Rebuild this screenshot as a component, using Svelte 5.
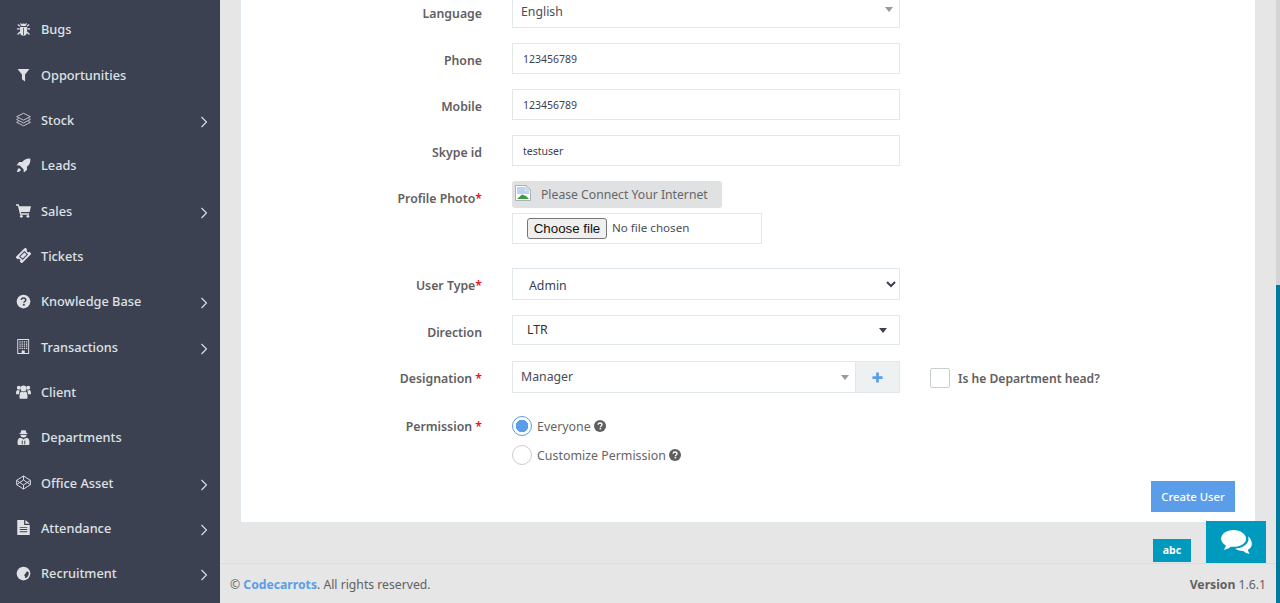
<script>
  const icons = {
    bug: '<path d="M8 6.500a4 4 0 0 1 8 0z"/><path d="M6.500 8h11v8.500a5.500 5.500 0 0 1-11 0z"/><path d="M6 11H1.500M18 11h4.500M6.500 7 3 4M17.500 7 21 4M6.500 16 2.500 20M17.500 16l4 4M7 2.500l2 2M17 2.500l-2 2" stroke="currentColor" stroke-width="2" fill="none"/><path d="M11.400 9h1.200v12h-1.200z" fill="#3c4152"/>',
    filter: '<path d="M2.500 3h19l-7 9V23l-5-3.500V12z"/>',
    layers: '<g fill="none" stroke="currentColor" stroke-width="1.300" stroke-linejoin="round"><path d="M12 2 23 7.500 12 13 1 7.500z"/><path d="M4 10.500 1 12 12 17.500 23 12l-3-1.500"/><path d="M4 15 1 16.500 12 22l11-5.500L20 15"/></g>',
    rocket: '<path d="M23 1c-6-.5-10 1.500-13 5.500H5L1 11.500l5 .5 6 6 .5 5 5-4v-5C21.500 11 23.500 7 23 1z"/><path d="M5 16c-2 1-3 3.500-3.500 6.500C4.500 22 7 21 8 19z"/>',
    cart: '<path d="M0 2h4.500l.8 3H24l-2.200 9.500H7.800l.5 2H21v2.200H6.500L3 4.200H0z"/><circle cx="8.500" cy="21.300" r="2.200"/><circle cx="19" cy="21.300" r="2.200"/>',
    ticket: '<g transform="rotate(-45 12 12)"><path d="M1 5H23V9.500a2.500 2.500 0 0 0 0 5V19H1V14.500a2.500 2.500 0 0 0 0-5z"/><path d="M6 8H18V16H6z" fill="#3c4152"/><path d="M7.500 9.500H16.500V14.500H7.500z"/></g>',
    question: '<circle cx="12" cy="12" r="11"/><path d="M8.500 9.500C8.700 7.500 10 6.500 12 6.500c2.200 0 3.600 1.200 3.600 3 0 2.500-3 2.500-3 4.500" fill="none" stroke="#3c4152" stroke-width="2.400"/><rect x="11" y="15.800" width="3" height="2.800" fill="#3c4152"/>',
    building: '<path fill-rule="evenodd" d="M2 0H21V24H2zM3.500 1.500V22.500H9V18.500H14V22.500H19.500V1.500z"/><path d="M5.500 3.500h2v2h-2zM9 3.500h2v2H9zM12.500 3.500h2v2h-2zM16 3.500h2v2h-2zM5.500 7h2v2h-2zM9 7h2v2H9zM12.500 7h2v2h-2zM16 7h2v2h-2zM5.500 10.500h2v2h-2zM9 10.500h2v2H9zM12.500 10.500h2v2h-2zM16 10.500h2v2h-2zM5.500 14h2v2h-2zM9 14h2v2H9zM12.500 14h2v2h-2zM16 14h2v2h-2z"/>',
    users: '<circle cx="4.500" cy="6" r="3.200"/><circle cx="19.500" cy="6" r="3.200"/><circle cx="12" cy="7" r="4.800"/><path d="M0 15c0-4 1.500-5.500 3-5.500 1 1 2 1 3 1-.5 2-1 3.500-1 6H1.500C.5 16.500 0 16 0 15zM24 15c0-4-1.500-5.500-3-5.500-1 1-2 1-3 1 .5 2 1 3.500 1 6h3.500c1 0 1.500-.5 1.500-1.500z"/><path d="M5.500 21.500c0-6 1.500-9.500 3.500-9.500 2 1.500 4 1.500 6 0 2 0 3.500 3.500 3.500 9.500 0 1.500-1 2-2 2h-9c-1 0-2-.5-2-2z"/>',
    secret: '<path d="M7 5 8.500 .5h7L17 5l3 1.500H4z"/><path d="M7 7.500h10c.3 2.500-2 4.500-5 4.500S6.700 10 7 7.500z"/><path d="M2.500 21c0-5 .5-7 4-8.500l3.500 1 2 1.500 2-1.500 3.500-1c3.500 1.500 4 3.500 4 8.500 0 2-1 3-2 3h-15c-1 0-2-1-2-3z"/><path d="M10 17v6M14 17v6" stroke="#3c4152" stroke-width="1.500"/>',
    codepen: '<g fill="none" stroke="currentColor" stroke-width="1.500" stroke-linejoin="round"><path d="M12 1.500 23 8.500v7L12 22.500 1 15.500v-7z"/><path d="M12 8 6 12l6 4 6-4z"/><path d="M12 1.500V8M12 16v6.500M1 8.500 6 12 1 15.500M23 8.500 18 12l5 3.500"/></g>',
    file: '<path fill-rule="evenodd" d="M2 0H13V8H22V24H2zM6 11V12.500H18V11zM6 14.500V16H18V14.500zM6 18V19.500H18V18z"/><path d="M15 0 22 6H15z"/>',
    globe: '<circle cx="12" cy="12" r="11"/><path d="M17 9c1.500-.3 2.800 .3 3.500 1.500.3 2.800-.7 5.500-2.800 7.600-1.300 .9-2.500 1.200-3.400 .9.400-1.700.2-3-1-3.800 0-1.700.9-2.200 1.800-2.700.5-1.300.7-2.700 1.900-3.500z" fill="#3c4152"/>'
  };

  const menu = [
    { label: 'Bugs', icon: 'bug' },
    { label: 'Opportunities', icon: 'filter' },
    { label: 'Stock', icon: 'layers', sub: true },
    { label: 'Leads', icon: 'rocket' },
    { label: 'Sales', icon: 'cart', sub: true },
    { label: 'Tickets', icon: 'ticket' },
    { label: 'Knowledge Base', icon: 'question', sub: true },
    { label: 'Transactions', icon: 'building', sub: true },
    { label: 'Client', icon: 'users' },
    { label: 'Departments', icon: 'secret' },
    { label: 'Office Asset', icon: 'codepen', sub: true },
    { label: 'Attendance', icon: 'file', sub: true },
    { label: 'Recruitment', icon: 'globe', sub: true }
  ];
</script>

{#snippet help()}
  <svg class="help" viewBox="0 0 24 24" fill="#5f5f5f">
    <circle cx="12" cy="12" r="12" />
    <path d="M8 9.500C8.200 7.300 9.800 6 12 6c2.400 0 4 1.400 4 3.300 0 2.800-3.200 2.700-3.200 5" fill="none" stroke="#fff" stroke-width="2.600" />
    <rect x="11.300" y="15.800" width="3" height="3" fill="#fff" />
  </svg>
{/snippet}

<div class="layout">
  <nav class="sidebar">
    {#each menu as item}
      <div class="menu-item">
        <svg class="menu-icon" viewBox="0 0 24 24" fill="currentColor">{@html icons[item.icon]}</svg>
        <span class="menu-label">{item.label}</span>
        {#if item.sub}
          <svg class="chevron" viewBox="0 0 8 12" fill="none" stroke="currentColor" stroke-width="1.100"><path d="M1.500 1 6.500 6l-5 5" /></svg>
        {/if}
      </div>
    {/each}
  </nav>

  <main class="main">
    <div class="content">
      <form class="card">
        <div class="row first">
          <span class="label">Language</span>
          <div class="select2"><span>English</span><i class="caret gray"></i></div>
        </div>
        <div class="row">
          <label class="label" for="phone">Phone</label>
          <input id="phone" class="input" value="123456789" />
        </div>
        <div class="row">
          <label class="label" for="mobile">Mobile</label>
          <input id="mobile" class="input" value="123456789" />
        </div>
        <div class="row">
          <label class="label" for="skype">Skype id</label>
          <input id="skype" class="input" value="testuser" />
        </div>
        <div class="row photo-row">
          <span class="label">Profile Photo<em>*</em></span>
          <div class="photo">
            <div class="thumb">
              <svg class="broken" viewBox="0 0 16 16">
                <path d="M.5.5H11L15.500 5V15.500H.5z" fill="#fff" stroke="#a9b1ba" />
                <path d="M2 2H10V6H14V9L2 9z" fill="#bcd3f5" />
                <path d="M2 14 7 9.500 11 11 14 14z" fill="#3f9a3a" />
                <path d="M11 .5V5H15.500z" fill="#e8e8e8" stroke="#a9b1ba" stroke-width=".7" />
              </svg>
              <span>Please Connect Your Internet</span>
            </div>
            <div class="file-box">
              <button type="button" class="file-btn">Choose file</button>
              <span>No file chosen</span>
            </div>
          </div>
        </div>
        <div class="row type-row">
          <label class="label" for="type">User Type<em>*</em></label>
          <select id="type" class="native"><option>Admin</option></select>
        </div>
        <div class="row direction-row">
          <span class="label">Direction</span>
          <div class="select2 direction"><span>LTR</span><i class="caret"></i></div>
        </div>
        <div class="row designation-row">
          <span class="label">Designation <em>*</em></span>
          <div class="group">
            <div class="select2 designation"><span>Manager</span><i class="caret gray"></i></div>
            <button type="button" class="addon" aria-label="Add">
              <svg viewBox="0 0 12 12" fill="#5b9de8"><path d="M4.500 .5h3v4h4v3h-4v4h-3v-4h-4v-3h4z" /></svg>
            </button>
          </div>
          <div class="head-check"><span class="checkbox"></span><span>Is he Department head?</span></div>
        </div>
        <div class="row permission-row">
          <span class="label">Permission <em>*</em></span>
          <div class="radios">
            <div class="radio-line"><span class="radio on"></span><span>Everyone</span>{@render help()}</div>
            <div class="radio-line"><span class="radio"></span><span>Customize Permission</span>{@render help()}</div>
          </div>
        </div>
        <div class="actions"><button type="button" class="create">Create User</button></div>
      </form>
    </div>

    <footer class="footer">
      <span>© <a href="#top">Codecarrots</a>. All rights reserved.</span>
      <span><b>Version</b> 1.6.1</span>
    </footer>
  </main>

  <div class="badge">abc</div>
  <button type="button" class="chat" aria-label="Chat">
    <svg viewBox="0 0 32 26" fill="#fff">
      <path d="M13 0C5.800 0 0 4 0 9c0 2.900 2 5.400 5 7-.4 1.500-1.200 3-2.500 4.300 3 0 5.500-1.200 7.500-3 1 .1 2 .2 3 .2 7.200 0 13-3.800 13-8.500S20.200 0 13 0z" />
      <path d="M28 6.500c.3.8.500 1.600.5 2.500 0 5.500-6 10-14 10.300C16.500 21 19.800 22 23 21.800c1.800 1.600 4 2.700 7 3-1-1.200-1.900-2.700-2.200-4.300 2.600-1.300 4.200-3.500 4.200-6 0-3.200-1.500-6.100-4-8z" />
    </svg>
  </button>
  <div class="scroll-track"><div class="scroll-thumb"></div></div>
</div>

<style>
  :global(body) {
    margin: 0;
    overflow: hidden;
    font-family: "Noto Sans", "Open Sans", sans-serif;
  }

  .layout {
    display: flex;
    position: relative;
    height: 603px;
    overflow: hidden;
    background: #e6e6e6;
  }

  .sidebar {
    flex: 0 0 220px;
    box-sizing: border-box;
    padding-top: 6.600px;
    background: #3c4152;
    color: #dfe1e5;
  }

  .menu-item {
    display: flex;
    align-items: center;
    height: 45.33px;
    padding-left: 16px;
    box-sizing: border-box;
  }

  .menu-icon {
    flex: 0 0 15px;
    width: 15px;
    height: 15px;
    margin-right: 10px;
  }

  .menu-label {
    font-size: 12.750px;
    font-weight: 500;
  }

  .chevron {
    width: 8px;
    height: 12px;
    margin-left: auto;
    margin-right: 12px;
    margin-top: 4px;
  }

  .main {
    flex: 1;
    display: flex;
    flex-direction: column;
    min-width: 0;
  }

  .content {
    flex: 1;
    padding: 0 24px 0 20px;
  }

  .card {
    height: 523px;
    box-sizing: border-box;
    background: #fff;
    border: 1px solid #e0e8ec;
    border-top: 0;
    overflow: hidden;
  }

  .row {
    display: grid;
    grid-template-columns: 241px 388px;
    column-gap: 30px;
    margin-bottom: 15px;
    align-items: start;
  }

  .row.first {
    margin-top: -3px;
    margin-bottom: 15px;
  }

  .label {
    text-align: right;
    font-size: 12.300px;
    font-weight: 600;
    color: #5f6062;
    line-height: 20px;
    padding-top: 8px;
  }

  .row.first .label {
    padding-top: 7px;
  }

  .label em {
    font-style: normal;
    color: #e8131c;
  }

  .input,
  .select2 {
    box-sizing: border-box;
    width: 100%;
    height: 31px;
    border: 1px solid #e0e8e9;
    background: #fff;
    font-family: inherit;
    outline: none;
  }

  .input {
    padding: 0 10px;
    font-size: 10.500px;
    color: #3c4152;
  }

  .select2 {
    display: flex;
    align-items: center;
    justify-content: space-between;
    padding: 0 6px 0 8px;
    font-size: 12.300px;
    color: #4a4d55;
  }

  .caret {
    width: 0;
    height: 0;
    border-left: 4px solid transparent;
    border-right: 4px solid transparent;
    border-top: 5px solid #3c4152;
  }

  .caret.gray {
    border-top-color: #999;
  }

  .row.first .select2 span {
    margin-top: -3px;
  }

  .row.first .caret {
    margin-top: -6px;
  }

  .photo-row {
    margin-bottom: 24px;
  }

  .photo {
    display: flex;
    flex-direction: column;
    gap: 5px;
  }

  .thumb {
    display: flex;
    align-items: center;
    width: 210px;
    height: 27px;
    box-sizing: border-box;
    padding-left: 3px;
    gap: 10px;
    border-radius: 3px;
    background: #e0e1e3;
    color: #666;
    font-size: 12.200px;
  }

  .broken {
    width: 16px;
    height: 16px;
    margin-top: -3px;
  }

  .file-box {
    box-sizing: border-box;
    width: 250px;
    height: 31px;
    padding-left: 14px;
    display: flex;
    align-items: center;
    gap: 5px;
    border: 1px solid #e0e8e9;
    font-size: 11.600px;
    color: #4a4d55;
  }

  .file-box span {
    margin-top: -2px;
  }

  .file-btn {
    font-family: "Liberation Sans", sans-serif;
    font-size: 13.300px;
    width: 80px;
    height: 21px;
    padding: 0;
    color: #111;
    background: #efefef;
    border: 1px solid #767676;
    border-radius: 3px;
  }

  .native {
    box-sizing: border-box;
    width: 100%;
    height: 32px;
    padding: 2px 12px 0;
    font-family: inherit;
    font-size: 12.300px;
    color: #3c4152;
    background: #fff;
    border: 1px solid #e0e8e9;
    outline: none;
  }

  .direction {
    padding: 0 12px 0 14px;
    color: #333;
    height: 30px;
  }

  .direction span {
    margin-top: -2px;
  }

  .direction-row {
    margin-bottom: 16px;
  }

  .designation-row {
    grid-template-columns: 241px 388px auto;
    margin-bottom: 22px;
  }

  .group {
    display: flex;
    height: 32px;
  }

  .designation {
    flex: 1;
    height: 32px;
    border-right: 0;
    padding-right: 6px;
  }

  .designation span {
    margin-top: -2px;
  }

  .addon {
    width: 45px;
    padding: 0;
    background: #eef1f1;
    border: 1px solid #e0e8e9;
    display: flex;
    align-items: center;
    justify-content: center;
  }

  .addon svg {
    width: 11px;
    height: 11px;
  }

  .head-check {
    display: flex;
    align-items: center;
    gap: 8px;
    height: 32px;
    margin-top: 1px;
    font-size: 12.100px;
    font-weight: 600;
    color: #5f6062;
  }

  .checkbox {
    width: 18px;
    height: 18px;
    border: 1px solid #c8cdd0;
    border-radius: 2px;
    background: #fff;
  }

  .permission-row .label {
    padding-top: 1px;
  }

  .radios {
    display: flex;
    flex-direction: column;
    gap: 9px;
  }

  .radio-line {
    display: flex;
    align-items: center;
    height: 20px;
    font-size: 12.400px;
    color: #666;
  }

  .radio {
    box-sizing: border-box;
    flex: none;
    width: 20px;
    height: 20px;
    margin-right: 5px;
    border: 1px solid #ccc;
    border-radius: 50%;
    background: #fff;
  }

  .radio.on {
    border-color: #5b9de8;
    background: radial-gradient(circle, #5b9de8 0 6px, #fff 6.500px);
  }

  .help {
    width: 12px;
    height: 12px;
    margin-left: 3px;
  }

  .actions {
    display: flex;
    justify-content: flex-end;
    padding-right: 20px;
    margin-top: 16px;
  }

  .create {
    width: 84px;
    height: 31px;
    padding: 0;
    border: 0;
    background: #5b9de8;
    color: #fff;
    font-family: inherit;
    font-size: 11.300px;
    font-weight: 500;
  }

  .footer {
    flex: 0 0 39px;
    box-sizing: content-box;
    display: flex;
    align-items: center;
    justify-content: space-between;
    padding: 0 14px 0 10px;
    border-top: 1px solid #d5dde3;
    font-size: 12.200px;
    color: #616161;
  }

  .footer span {
    margin-top: 2px;
  }

  .footer a {
    color: #5b9de8;
    font-weight: 700;
    text-decoration: none;
  }

  .footer b {
    font-weight: 700;
  }

  .badge {
    position: absolute;
    left: 1153px;
    top: 539px;
    width: 38px;
    height: 22px;
    padding-bottom: 1px;
    display: flex;
    align-items: center;
    justify-content: center;
    background: #009abf;
    color: #fff;
    font-size: 10.500px;
    font-weight: 700;
  }

  .chat {
    position: absolute;
    left: 1206px;
    top: 521px;
    width: 60px;
    height: 42px;
    padding: 0;
    border: 0;
    background: #009abf;
    display: flex;
    align-items: center;
    justify-content: center;
  }

  .chat svg {
    width: 31px;
    height: 25px;
  }

  .scroll-track {
    position: absolute;
    top: 0;
    right: 0;
    bottom: 0;
    width: 4px;
    background: #d4d4d4;
  }

  .scroll-thumb {
    position: absolute;
    top: 285px;
    bottom: 0;
    left: 0;
    right: 0;
    background: #007a9c;
  }
</style>
